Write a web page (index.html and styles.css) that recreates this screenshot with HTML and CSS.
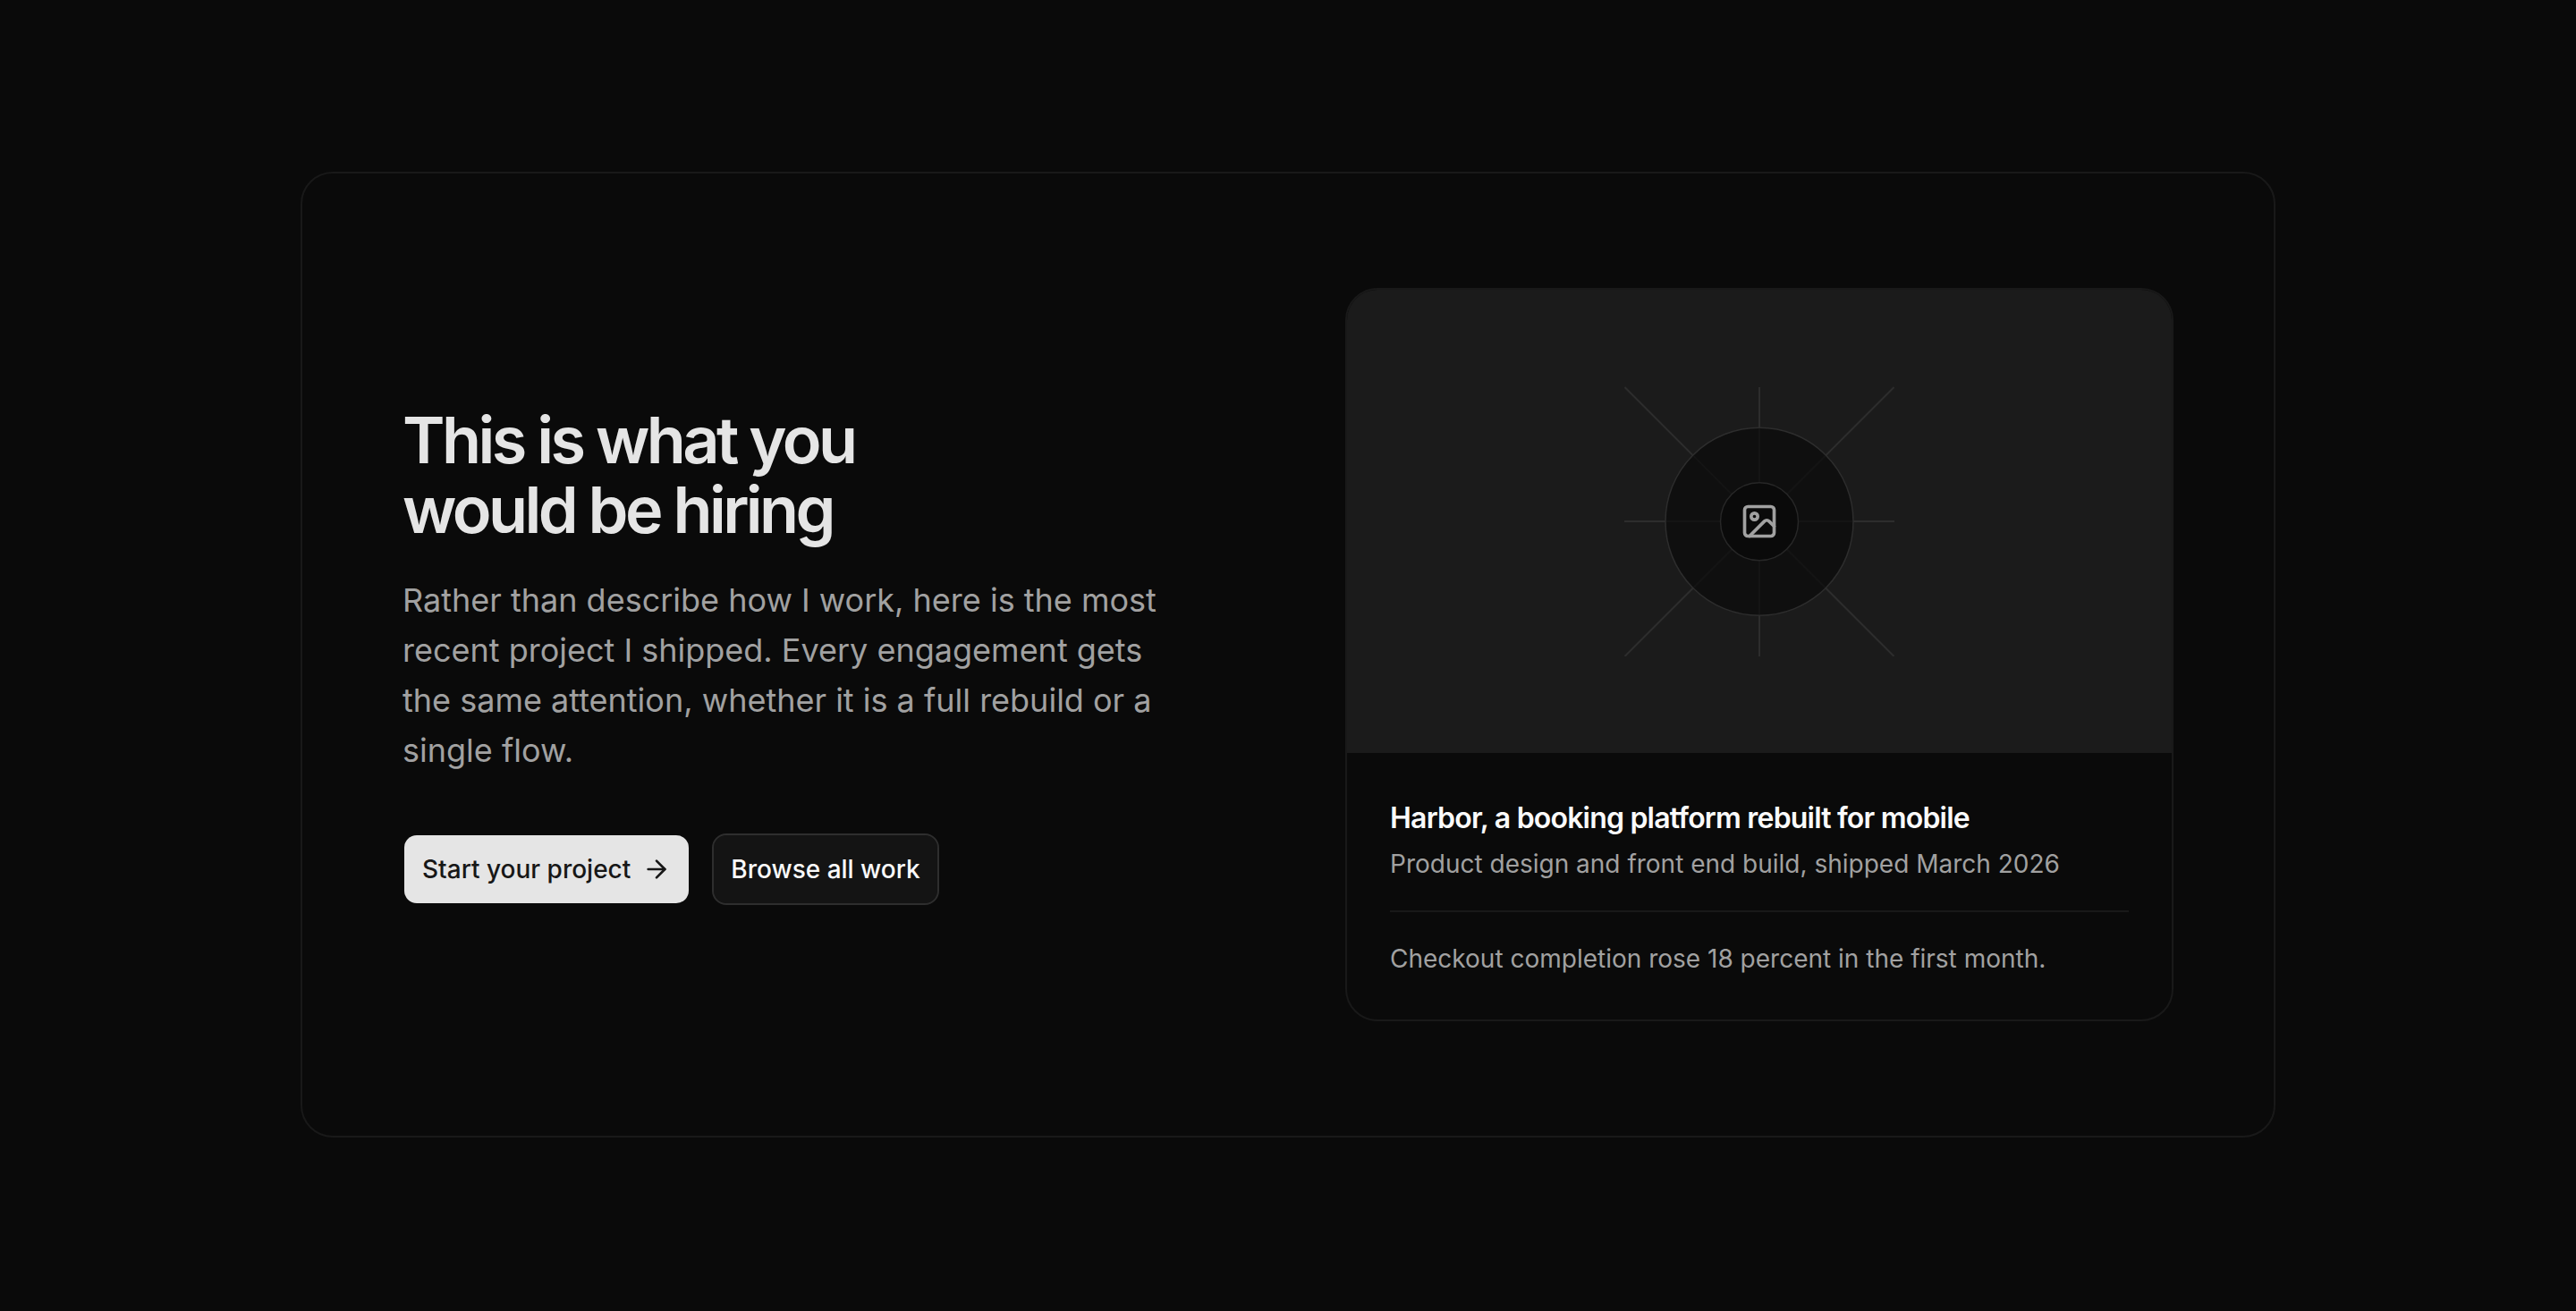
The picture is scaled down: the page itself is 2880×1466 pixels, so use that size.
FILE: index.html
```
<!DOCTYPE html>
<html lang="en">
<head>
  <meta charset="UTF-8" />
  <title>Harbor, featured project</title>
  <meta name="viewport" content="width=device-width, initial-scale=1" />
  <link rel="stylesheet" href="styles.css">
</head>
<body>
  <section class="cta">
    <!-- Intro copy -->
    <div class="intro">
      <h2 class="title">This is what you<br />would be hiring</h2>
      <p class="lead">
        Rather than describe how I work, here is the most recent project I shipped. Every engagement gets the same attention, whether it is a full rebuild or a single flow.
      </p>
      <div class="actions">
        <a class="btn btn-primary" href="#">
          Start your project
          <svg class="arrow" viewBox="0 0 24 24"><path d="M5 12h14" /><path d="m12 5 7 7-7 7" /></svg>
        </a>
        <a class="btn btn-outline" href="#">Browse all work</a>
      </div>
    </div>

    <!-- Project card -->
    <article class="project">
      <div class="media">
        <svg class="placeholder" viewBox="0 0 302 302">
          <g class="rays">
            <path d="M151 1v301M0 151h302M.5 1l301 301M301.5 1L.5 302" />
          </g>
          <circle class="ring" cx="151" cy="151.2" r="105" />
          <circle class="hub" cx="151" cy="151.2" r="43.5" />
          <svg class="picture" x="129" y="129" width="44" height="44" viewBox="0 0 24 24">
            <rect x="3" y="3" width="18" height="18" rx="2" />
            <circle cx="9" cy="9" r="2" />
            <path d="m21 15-3.086-3.086a2 2 0 0 0-2.828 0L6 21" />
          </svg>
        </svg>
      </div>
      <div class="details">
        <h3 class="name">Harbor, a booking platform rebuilt for mobile</h3>
        <p class="meta">Product design and front end build, shipped March 2026</p>
        <p class="result">Checkout completion rose 18 percent in the first month.</p>
      </div>
    </article>
  </section>
</body>
</html>
```

FILE: styles.css
```
* {
  box-sizing: border-box;
}
body {
  margin: 0;
  padding-top: 192px;
  background: #0a0a0a;
  color: #fafafa;
  font-family: Inter, 'Liberation Sans', sans-serif;
}
h2, h3, p {
  margin: 0;
}
.cta {
  display: grid;
  grid-template-columns: 1fr 1fr;
  align-items: center;
  gap: 128px;
  width: 2208px;
  margin: 0 auto;
  padding: 128px 112px;
  border: 2px solid #191919;
  border-radius: 36px;
}
.title {
  padding-top: 1px;
  color: #e5e5e5;
  font-size: 72px;
  font-weight: 600;
  line-height: 78px;
  letter-spacing: -0.05em;
}
.lead {
  max-width: 864px;
  margin-top: 34px;
  color: #a1a1a1;
  font-size: 36px;
  line-height: 56px;
}
.actions {
  display: flex;
  gap: 24px;
  margin-top: 65px;
}
.btn {
  display: flex;
  align-items: center;
  gap: 13px;
  height: 80px;
  padding: 0 20px;
  border: 2px solid transparent;
  border-radius: 16px;
  background-clip: padding-box;
  font-size: 28px;
  font-weight: 500;
  text-decoration: none;
  white-space: nowrap;
}
.btn-primary {
  background-color: #e5e5e5;
  color: #171717;
}
.btn-outline {
  padding: 0 19px;
  background-color: #141414;
  border-color: #2e2e2e;
  color: #fafafa;
}
.arrow {
  width: 32px;
  height: 32px;
  fill: none;
  stroke: currentColor;
  stroke-width: 2;
  stroke-linecap: round;
  stroke-linejoin: round;
}
.project {
  overflow: hidden;
  border: 2px solid #191919;
  border-radius: 36px;
}
.media {
  display: flex;
  align-items: center;
  justify-content: center;
  height: 518px;
  background: #1b1b1b;
}
.placeholder {
  width: 302px;
  height: 302px;
}
.rays {
  fill: none;
  stroke: #2d2d2d;
  stroke-width: 2;
}
.ring {
  fill: rgba(10, 10, 10, 0.7);
  stroke: #2d2d2d;
  stroke-width: 1.5;
}
.hub {
  fill: #0a0a0a;
  stroke: #272727;
  stroke-width: 1.5;
}
.picture {
  fill: none;
  stroke: #a1a1a1;
  stroke-width: 2;
  stroke-linecap: round;
  stroke-linejoin: round;
}
.details {
  padding: 49px 48px 48px;
}
.name {
  font-size: 32px;
  font-weight: 600;
  line-height: 48px;
  letter-spacing: -0.025em;
}
.meta {
  margin-top: 7px;
  color: #a1a1a1;
  font-size: 28px;
  line-height: 40px;
}
.result {
  margin-top: 32px;
  padding-top: 32px;
  border-top: 2px solid #191919;
  color: #a1a1a1;
  font-size: 28px;
  line-height: 40px;
}
```
